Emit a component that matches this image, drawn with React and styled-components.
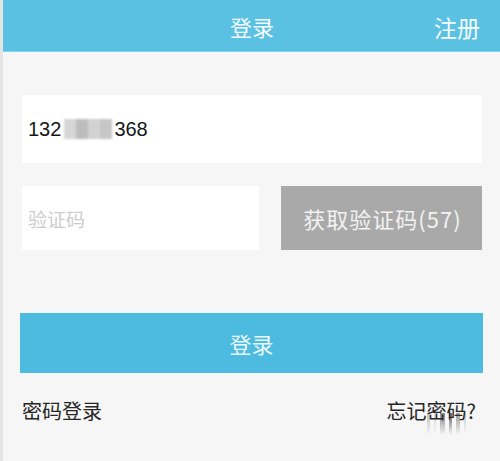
import React from "react";
import styled, { createGlobalStyle } from "styled-components";

const GlobalStyle = createGlobalStyle`
  html, body {
    margin: 0;
    padding: 0;
    background: #f6f6f6;
  }
  body {
    font-family: "Noto Sans CJK SC", "Noto Sans", sans-serif;
  }
`;

export default function App() {
  return (
    <>
      <GlobalStyle />
      <Page>
        <Header>
          <Title>登录</Title>
          <HeaderLink>注册</HeaderLink>
        </Header>
        <Form>
          <PhoneField>
            132
            <Mosaic>
              <Tile $shade="#d6d6d6" />
              <Tile $shade="#bdbdbd" />
              <Tile $shade="#d2d2d2" />
              <Tile $shade="#c6c6c6" />
            </Mosaic>
            368
          </PhoneField>
          <CodeRow>
            <CodeField>验证码</CodeField>
            <CodeButton>获取验证码(57)</CodeButton>
          </CodeRow>
          <LoginButton>登录</LoginButton>
          <LinkRow>
            <BottomLink>密码登录</BottomLink>
            <ForgotWrap>
              <BottomLink>忘记密码?</BottomLink>
              <Smear>
                <Bar $w={3} $o={0.25} />
                <Bar $w={2} $o={0.15} />
                <Bar $w={5} $o={0.55} />
                <Bar $w={3} $o={0.7} />
                <Bar $w={4} $o={0.45} />
                <Bar $w={2} $o={0.2} />
              </Smear>
            </ForgotWrap>
          </LinkRow>
        </Form>
      </Page>
    </>
  );
}

const Page = styled.div`
  width: 500px;
  height: 461px;
  box-sizing: border-box;
  border-left: 3px solid rgba(0, 0, 0, 0.07);
  display: flex;
  flex-direction: column;
`;

const Header = styled.div`
  height: 52px;
  background: #5bc1e3;
  border-bottom: 1px solid #7fd3ee;
  box-sizing: border-box;
  position: relative;
  display: flex;
  align-items: center;
  justify-content: center;
`;

const Title = styled.div`
  color: #f4fbfe;
  font-size: 22px;
  margin-left: 1px;
`;

const HeaderLink = styled.div`
  position: absolute;
  right: 20px;
  top: 10px;
  color: #f4fbfe;
  font-size: 23px;
`;

const Form = styled.div`
  padding: 43px 18px 0 19px;
  display: flex;
  flex-direction: column;
`;

const PhoneField = styled.div`
  height: 68px;
  background: #ffffff;
  display: flex;
  align-items: center;
  padding-left: 6px;
  font-family: "Liberation Sans", sans-serif;
  font-size: 20px;
  color: #151515;
`;

const Mosaic = styled.span`
  display: inline-flex;
  height: 20px;
  width: 48px;
  margin: 0 2px 0 3px;
  filter: blur(0.8px);
`;

const Tile = styled.span`
  flex: 1;
  background: ${(p) => p.$shade};
`;

const CodeRow = styled.div`
  margin-top: 23px;
  display: flex;
  gap: 22px;
  height: 64px;
`;

const CodeField = styled.div`
  width: 237px;
  background: #ffffff;
  display: flex;
  align-items: center;
  padding-left: 6px;
  box-sizing: border-box;
  font-size: 19px;
  color: #cdcdcd;
`;

const CodeButton = styled.div`
  flex: 1;
  background: #a9a9a9;
  display: flex;
  align-items: center;
  justify-content: center;
  font-size: 22px;
  letter-spacing: 1px;
  color: #f2f2f2;
  padding-left: 2px;
`;

const LoginButton = styled.div`
  margin: 63px -1px 0 -2px;
  height: 60px;
  background: #4dbbe0;
  display: flex;
  align-items: center;
  justify-content: center;
  font-size: 22px;
  color: #e9f8fd;
`;

const LinkRow = styled.div`
  margin-top: 23px;
  display: flex;
  justify-content: space-between;
  align-items: center;
  padding-right: 6px;
`;

const BottomLink = styled.div`
  font-size: 20px;
  color: #262626;
`;

const ForgotWrap = styled.div`
  position: relative;
`;

const Smear = styled.div`
  position: absolute;
  left: 40px;
  top: 17px;
  display: flex;
  gap: 4px;
  filter: blur(0.6px);
`;

const Bar = styled.span`
  width: ${(p) => p.$w}px;
  height: 22px;
  background: linear-gradient(rgba(40, 40, 40, ${(p) => p.$o}), rgba(40, 40, 40, 0));
`;
